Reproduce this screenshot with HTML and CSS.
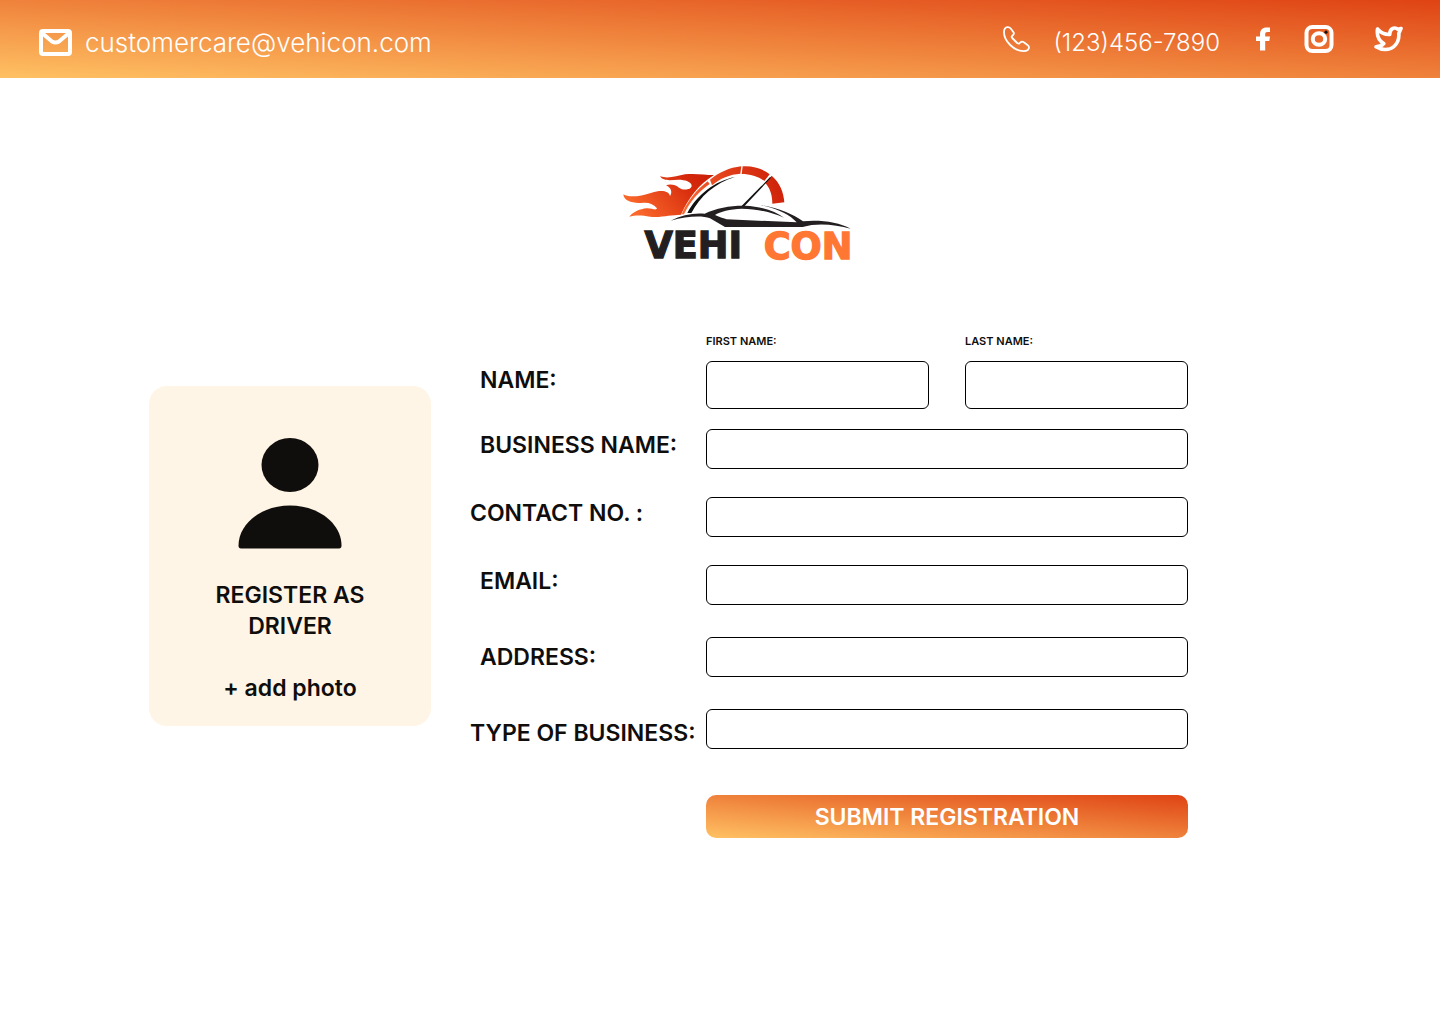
FILE: index.html
```html
<!DOCTYPE html>
<html lang="en">
<head>
<meta charset="utf-8">
<meta name="viewport" content="width=device-width, initial-scale=1">
<title>Vehicon – Driver registration</title>
<link rel="stylesheet" href="styles.css">
</head>
<body>
<header class="topbar">
  <a class="contact contact--mail" href="mailto:customercare@vehicon.com">
    <svg class="icon" width="33" height="27" viewBox="0 0 33 27" fill="none" stroke="#fff" stroke-width="4" stroke-linejoin="round" aria-hidden="true">
      <rect x="2" y="2" width="29" height="23" rx="2"/>
      <path d="M3 4L13 12.500Q16.500 14.500 20 12.500L30 4"/>
    </svg>
    <span>customercare@vehicon.com</span>
  </a>
  <div class="topbar-right">
    <a class="contact contact--phone" href="tel:1234567890">
      <svg class="icon" width="27" height="27" viewBox="0 0 27 27" fill="none" stroke="#fff" stroke-width="1.800" stroke-linejoin="round" aria-hidden="true">
        <path d="M4.500 1.200C2.300 1.400 1 3.300 1 6.200C1 15 11 25.200 20.500 25.200C24 25.200 26 23.500 26 21.300C26 20.300 25.500 19.500 24.500 18.900L20.800 16.300C19.500 15.300 18.500 15.400 17.500 16.300L16.500 17.200C15.800 17.800 15 17.600 14.200 17L9.200 12C8.500 11.200 8.500 10.500 9.200 9.800L10.200 8.800C11 8 11.200 7.200 10.500 6.200L7.700 2.500C6.800 1.500 5.800 1.100 4.500 1.200Z"/>
      </svg>
      <span>(123)456-7890</span>
    </a>
    <nav class="social" aria-label="Social media">
      <a href="#facebook" aria-label="Facebook">
        <svg class="icon" width="14" height="24" viewBox="0 0 14 24" fill="#fff" aria-hidden="true">
          <path d="M14 .5V5H11.500C9.800 5 9.200 5.800 9.200 7V9.500H14L13.300 14H9.200V23.500H4V14H0V9.500H4V7.500C4 3 6.500 .5 10.500 .5Z"/>
        </svg>
      </a>
      <a href="#instagram" aria-label="Instagram">
        <svg class="icon" width="30" height="28" viewBox="0 0 30 28" fill="none" stroke="#fff" stroke-width="4" aria-hidden="true">
          <rect x="2.500" y="2" width="25" height="24" rx="6"/>
          <ellipse cx="15" cy="14" rx="6.200" ry="5.800"/>
          <circle cx="22" cy="7.200" r="1.600" fill="#111" stroke="none"/>
        </svg>
      </a>
      <a href="#twitter" aria-label="Twitter">
        <svg class="icon" width="30" height="26" viewBox="0 0 30 26" fill="none" stroke="#fff" stroke-width="3.600" stroke-linejoin="round" stroke-linecap="round" aria-hidden="true">
          <path d="M27 2.500L24 3.400C21 .7 15.500 2 15.800 8.500C10.500 8.800 6.500 6.500 3.500 3C2.500 10 4.500 14.500 9.800 17.500C8 19.500 5 20.800 2 20.800C8 24.600 15.500 24.400 20 20.500C24.500 16.500 25.200 12 24.800 7.500Z"/>
        </svg>
      </a>
    </nav>
  </div>
</header>

<main class="page">
  <svg class="logo" width="238" height="112" viewBox="36 27 714 336" role="img" aria-label="Vehicon">
    <defs>
      <linearGradient id="flame" x1="0" y1=".6" x2="1" y2=".2">
        <stop offset="0" stop-color="#fb6a2c"/>
        <stop offset=".75" stop-color="#d62a0c"/>
        <stop offset="1" stop-color="#cc1f08"/>
      </linearGradient>
      <linearGradient id="dial" gradientUnits="userSpaceOnUse" x1="215" y1="178" x2="520" y2="60">
        <stop offset="0" stop-color="#fa7038"/>
        <stop offset=".45" stop-color="#e5441c"/>
        <stop offset="1" stop-color="#cc1f08"/>
      </linearGradient>
    </defs>
    <path fill="url(#flame)" d="M40 118C55 128 90 125 125 113C150 105 176 105 180 123C188 112 184 99 168 91C182 86 197 90 207 98C219 107 243 105 245 93C245 80 225 74 205 74C185 75 160 80 150 64C175 72 200 63 225 58C255 54 285 60 312 60C267 88 234 130 213 179L175 182C160 184 140 188 120 185C95 180 75 180 58 185C70 170 90 162 110 160C125 159 138 168 141 160C132 148 118 142 100 143C70 146 42 140 40 118Z"/>
    <g fill="url(#dial)">
      <path d="M215 178C232 138 260 104 293 79L299 87C265 110 240 140 222 178Z"/>
      <path d="M300 74C328 52 358 38 394 34L391 56C360 58 330 70 306 91Z"/>
      <path d="M398 34C430 32 458 41 479 58L463 78C445 64 420 57 395 57Z"/>
      <path d="M485 62C509 82 521 112 523 142L487 146C487 120 480 98 465 83Z"/>
    </g>
    <path fill="#111" d="M375 66C315 78 262 118 232 174H244C270 124 315 84 375 66Z"/>
    <path fill="#111" d="M394 154L480 66L483 68L403 154Z"/>
    <path fill="none" stroke="#fff" stroke-width="2" d="M455 92L485 58"/>
    <path fill="#231f20" d="M182 197C215 180 250 173 284 176C320 158 365 151 405 152C450 154 495 168 522 188C485 172 440 161 395 161C360 162 330 170 315 180C330 187 342 190 350 193L560 202L552 194C527 172 492 159 452 150C505 158 550 178 579 199C630 194 685 201 722 221C675 208 620 203 578 216H345L300 190C275 181 230 184 182 197Z"/>
    <text class="logo-text" x="250" y="309" text-anchor="middle" fill="#231f20" stroke="#231f20">VEHI</text>
    <text class="logo-text" x="594" y="311" text-anchor="middle" fill="#ff7733" stroke="#ff7733">CON</text>
  </svg>

  <div class="registration">
    <section class="profile">
      <svg class="avatar" width="104" height="111" viewBox="0 0 104 111" fill="#0f0e0c" aria-hidden="true">
        <ellipse cx="52" cy="27" rx="28.500" ry="27"/>
        <path d="M3 110.500Q.5 110.500 .5 107.500C.5 86 23 67.500 52 67.500S103.500 86 103.500 107.500Q103.500 110.500 101 110.500Z"/>
      </svg>
      <h1 class="profile-title">REGISTER AS DRIVER</h1>
      <button class="add-photo" type="button">+ add photo</button>
    </section>

    <form class="form">
      <div class="row row--name" role="group" aria-labelledby="name-label">
        <span class="label label--indent" id="name-label">NAME:</span>
        <div class="name-fields">
          <div class="name-field">
            <label class="sublabel" for="first">FIRST NAME:</label>
            <input class="input input--tall" id="first" type="text">
          </div>
          <div class="name-field">
            <label class="sublabel" for="last">LAST NAME:</label>
            <input class="input input--tall" id="last" type="text">
          </div>
        </div>
      </div>
      <div class="row row--tight">
        <label class="label label--indent" for="business">BUSINESS NAME:</label>
        <input class="input" id="business" type="text">
      </div>
      <div class="row">
        <label class="label" for="contact">CONTACT NO. :</label>
        <input class="input" id="contact" type="tel">
      </div>
      <div class="row">
        <label class="label label--indent" for="email">EMAIL:</label>
        <input class="input" id="email" type="email">
      </div>
      <div class="row row--loose row--center">
        <label class="label label--indent" for="address">ADDRESS:</label>
        <input class="input" id="address" type="text">
      </div>
      <div class="row row--loose row--end">
        <label class="label" for="type">TYPE OF BUSINESS:</label>
        <input class="input" id="type" type="text">
      </div>
      <div class="row row--submit">
        <button class="submit" type="submit">SUBMIT REGISTRATION</button>
      </div>
    </form>
  </div>
</main>
</body>
</html>
```
FILE: styles.css
```css
* {
  box-sizing: border-box;
}

body {
  margin: 0;
  background: #fff;
  color: #0f0e0c;
  font-family: Inter, "Open Sans", sans-serif;
  font-size: 23px;
  font-weight: 600;
  line-height: 31px;
}

.topbar {
  display: flex;
  justify-content: space-between;
  align-items: center;
  min-height: 78px;
  padding: 0 36px 0 39px;
  background: linear-gradient(to top right, #ffc163, #df4314);
}

.icon {
  display: block;
  flex: none;
}

.contact {
  display: flex;
  align-items: center;
  color: #fff;
  font-weight: 300;
  text-decoration: none;
  padding-top: 6px;
}

.contact--mail {
  gap: 13px;
  font-size: 26px;
}

.contact--phone {
  gap: 23px;
  font-size: 24px;
}

.contact--phone .icon {
  margin-bottom: 6px;
}

.topbar-right {
  display: flex;
  align-items: center;
  gap: 36px;
}

.social {
  display: flex;
  align-items: center;
  gap: 34px;
}

.social a:last-child {
  margin-left: 6px;
}

.page {
  padding: 86px 0 64px 149px;
}

.logo {
  display: block;
  margin-left: 473px;
}

.logo-text {
  font-family: "DejaVu Sans", sans-serif;
  font-size: 110px;
  font-weight: 700;
  stroke-width: 4px;
}

.registration {
  display: flex;
  align-items: flex-start;
  gap: 39px;
  max-width: 1039px;
  margin-top: 57px;
}

.profile {
  display: flex;
  flex: none;
  flex-direction: column;
  align-items: center;
  width: 282px;
  margin-top: 53px;
  padding: 52px 48px 22px;
  border-radius: 18px;
  background: #fff5e6;
}

.profile-title {
  margin: 31px 0;
  font: inherit;
  text-align: center;
}

.add-photo {
  padding: 0;
  border: 0;
  background: none;
  color: inherit;
  font: inherit;
  cursor: pointer;
}

.form {
  flex: 1;
}

.row {
  display: grid;
  grid-template-columns: 236px 1fr;
  align-items: start;
  margin-top: 28px;
}

.row--name {
  align-items: end;
  margin-top: 0;
}

.row--name .label {
  padding-bottom: 13px;
}

.row--tight {
  margin-top: 20px;
}

.row--loose {
  margin-top: 32px;
}

.row--center {
  align-items: center;
}

.row--end {
  align-items: end;
}

.row--submit {
  margin-top: 46px;
}

.label {
  padding-top: 1px;
  white-space: nowrap;
}

.label--indent {
  padding-left: 10px;
}

.name-fields {
  display: grid;
  grid-template-columns: 1fr 1fr;
  gap: 36px;
}

.name-field {
  display: flex;
  flex-direction: column;
  gap: 12px;
}

.sublabel {
  font-size: 11px;
  line-height: 16px;
}

.input {
  width: 100%;
  height: 40px;
  padding: 0 12px;
  border: 1px solid #000;
  border-radius: 6px;
  background: #fff;
  font: inherit;
  font-size: 18px;
}

.input--tall {
  height: 48px;
}

.submit {
  grid-column: 2;
  min-height: 43px;
  padding: 7px 16px 5px;
  border: 0;
  border-radius: 10px;
  background: linear-gradient(to top right, #ffc163, #df4314);
  color: #fff;
  font: inherit;
  cursor: pointer;
}
```
